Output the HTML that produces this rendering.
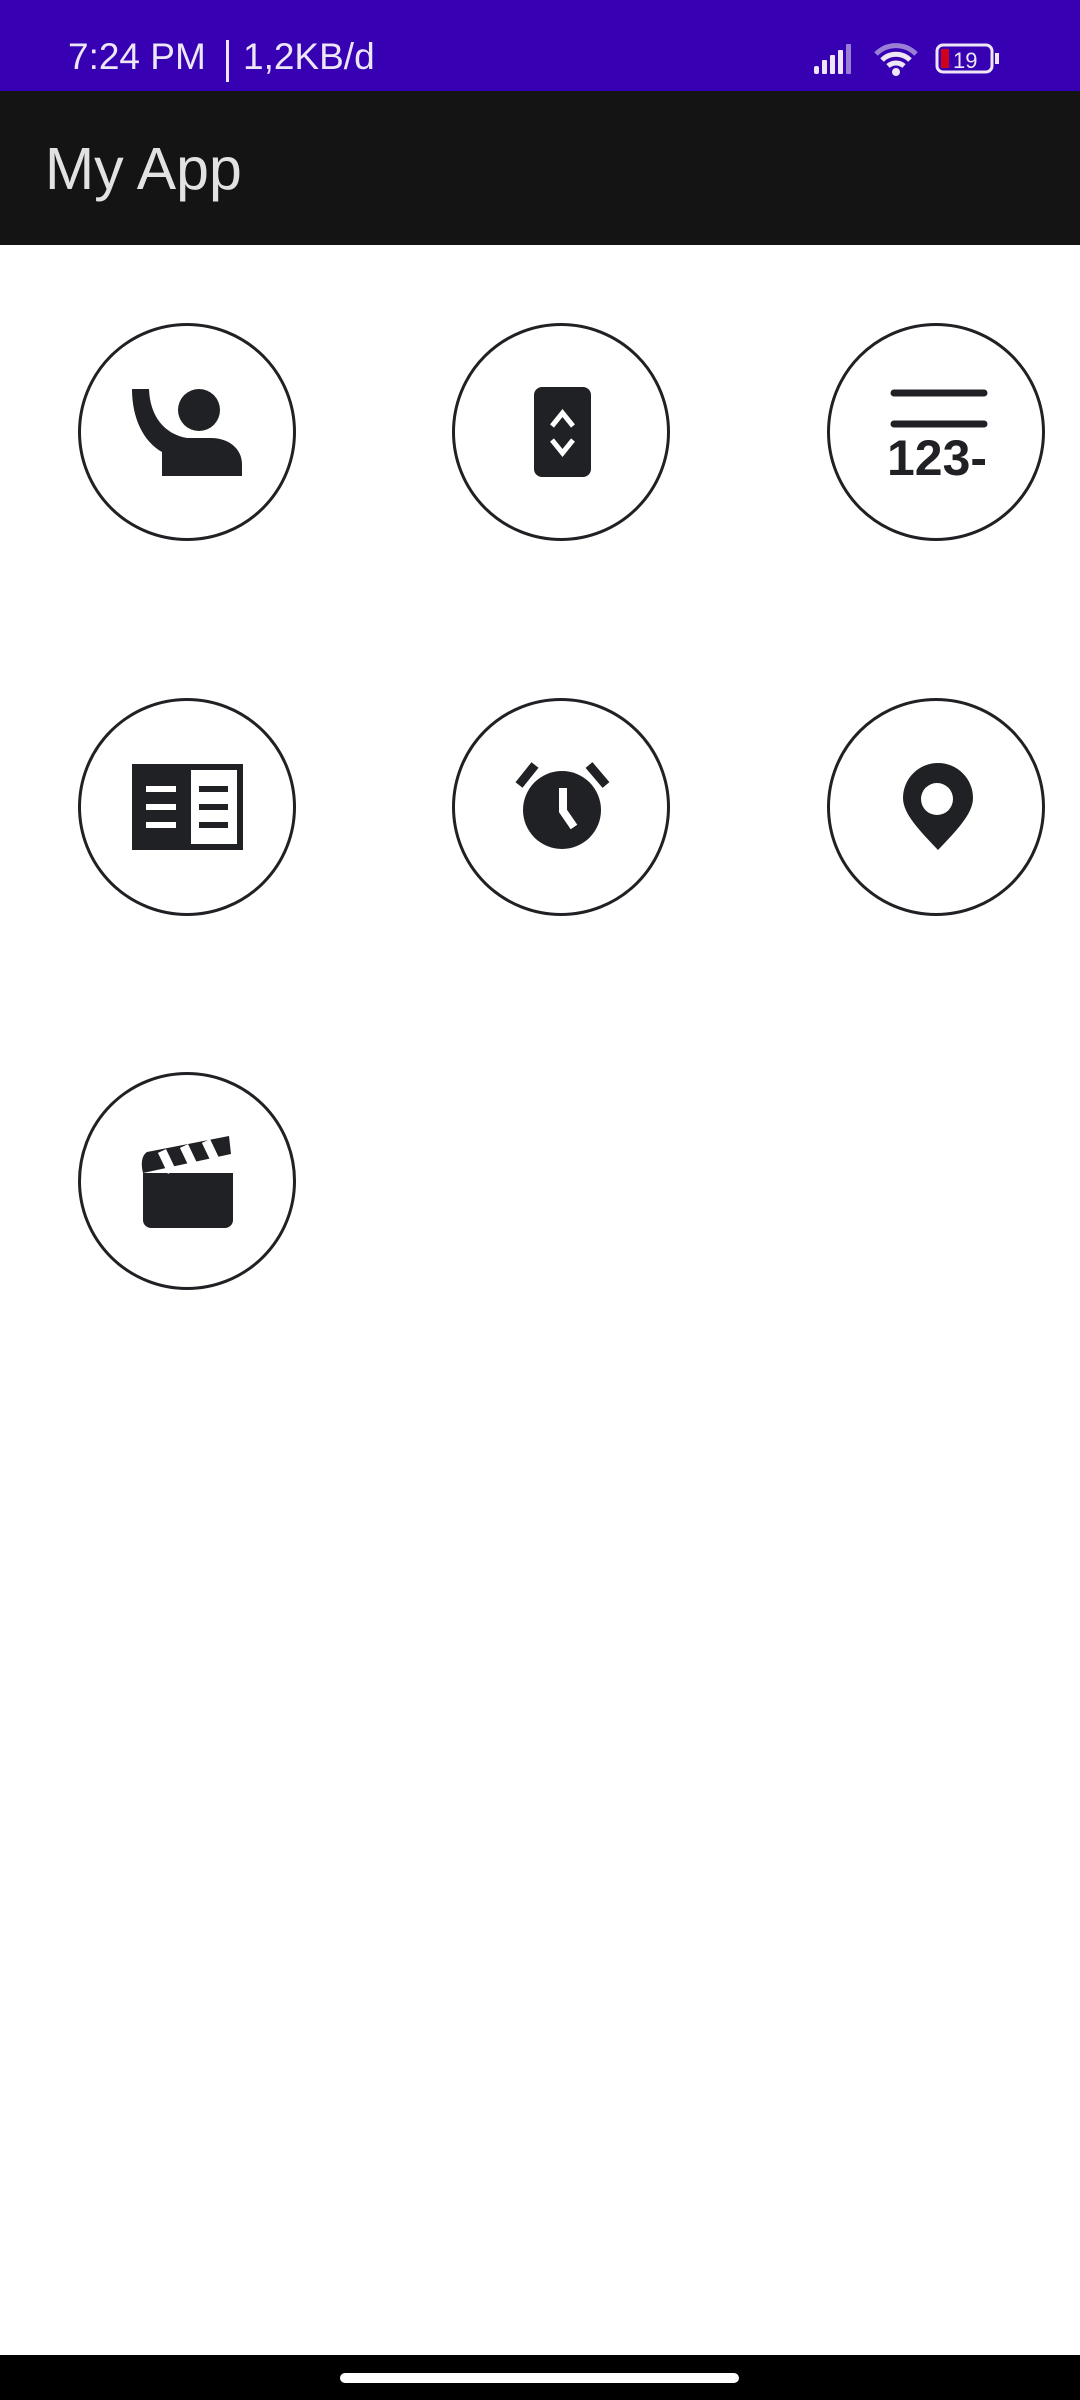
<!DOCTYPE html>
<html><head><meta charset="utf-8"><style>
html,body{margin:0;padding:0;width:1080px;height:2400px;background:#fff;overflow:hidden;font-family:"Liberation Sans",sans-serif}
.sb{position:absolute;left:0;top:0;width:1080px;height:91px;background:#3700B3}
.tb{position:absolute;left:0;top:91px;width:1080px;height:154px;background:#141414}
.t{position:absolute;color:#ece6f6;font-size:37px;top:36px;white-space:nowrap}
.title{position:absolute;left:45px;top:135px;color:#e2e2e2;font-size:59px}
.c{position:absolute;width:216px;height:216px;overflow:visible}
.nav{position:absolute;left:0;top:2355px;width:1080px;height:45px;background:#000}
.pill{position:absolute;left:340px;top:2373px;width:399px;height:10px;border-radius:5px;background:#fff}
</style></head><body>
<div class="sb"></div>
<div class="t" style="left:68px">7:24 PM</div>
<div style="position:absolute;left:226px;top:40px;width:3px;height:42px;background:#ece6f6"></div>
<div class="t" style="left:243px">1,2KB/d</div>
<svg style="position:absolute;left:810px;top:40px" width="200" height="40" viewBox="0 0 200 40">
 <g fill="#ece6f6"><rect x="4" y="26" width="5" height="8" rx="2"/><rect x="12" y="20" width="5" height="14" rx="1"/><rect x="20" y="15" width="5" height="19" rx="1"/><rect x="28" y="10" width="5" height="24" rx="1"/><rect x="36" y="4" width="5" height="30" rx="1" fill="#9a7fd6"/></g>
 <path d="M66 14 A28 28 0 0 1 106 14" fill="none" stroke="#9a7fd6" stroke-width="5"/>
 <path d="M72 20 A20 20 0 0 1 100 20" fill="none" stroke="#ece6f6" stroke-width="5"/>
 <path d="M78 26 A12 12 0 0 1 94 26" fill="none" stroke="#ece6f6" stroke-width="5"/>
 <circle cx="86" cy="32" r="4" fill="#ece6f6"/>
 <rect x="127" y="5" width="55" height="27" rx="6" fill="none" stroke="#ece6f6" stroke-width="3"/>
 <rect x="131" y="9" width="8" height="19" fill="#d0021b"/>
 <rect x="185" y="13" width="4" height="11" fill="#ece6f6"/>
 <text x="143" y="28" fill="#ece6f6" font-size="22" font-family="Liberation Sans">19</text>
</svg>
<div class="tb"></div>
<div class="title">My App</div>

<svg class="c" style="left:79px;top:324px" viewBox="0 0 216 216"><circle cx="108" cy="108" r="107.5" fill="none" stroke="#202124" stroke-width="3"/>
 <g fill="#202124"><circle cx="120" cy="86" r="21"/>
 <path d="M53,65 H70 C71,92 85,110 108,114 H132 C150,114 163,125 163,140 V152 H83 V128 C65,118 53,95 53,65 Z"/></g></svg>

<svg class="c" style="left:453px;top:324px" viewBox="0 0 216 216"><circle cx="108" cy="108" r="107.5" fill="none" stroke="#202124" stroke-width="3"/>
 <rect x="81" y="63" width="57" height="90" rx="8" fill="#202124"/>
 <path d="M99 102 L109.5 89 L120 102 M99 116 L109.5 129 L120 116" fill="none" stroke="#fff" stroke-width="5"/></svg>

<svg class="c" style="left:828px;top:324px" viewBox="0 0 216 216"><circle cx="108" cy="108" r="107.5" fill="none" stroke="#202124" stroke-width="3"/>
 <path d="M66 69 H156 M66 100 H156" stroke="#202124" stroke-width="7" stroke-linecap="round"/>
 <text x="59" y="151" font-size="50" font-weight="bold" fill="#202124" font-family="Liberation Sans" textLength="100" lengthAdjust="spacingAndGlyphs">123-</text></svg>

<svg class="c" style="left:79px;top:699px" viewBox="0 0 216 216"><circle cx="108" cy="108" r="107.5" fill="none" stroke="#202124" stroke-width="3"/>
 <rect x="53" y="65" width="111" height="86" fill="#202124"/>
 <rect x="112" y="71" width="46" height="74" fill="#fff"/>
 <g fill="#fff"><rect x="67" y="87" width="30" height="6"/><rect x="67" y="105" width="30" height="6"/><rect x="67" y="123" width="30" height="6"/></g>
 <g fill="#202124"><rect x="120" y="87" width="29" height="6"/><rect x="120" y="105" width="29" height="6"/><rect x="120" y="123" width="29" height="6"/></g></svg>

<svg class="c" style="left:453px;top:699px" viewBox="0 0 216 216"><circle cx="108" cy="108" r="107.5" fill="none" stroke="#202124" stroke-width="3"/>
 <circle cx="109" cy="111" r="39" fill="#202124"/>
 <path d="M82 66 L66 86 M136 66 L153 86" stroke="#202124" stroke-width="9"/>
 <path d="M110 89 V112 L121 128" fill="none" stroke="#fff" stroke-width="8"/></svg>

<svg class="c" style="left:828px;top:699px" viewBox="0 0 216 216"><circle cx="108" cy="108" r="107.5" fill="none" stroke="#202124" stroke-width="3"/>
 <path d="M110 151 C92 132 75 115 75 99 A35 35 0 0 1 145 99 C145 115 128 132 110 151 Z" fill="#202124"/>
 <circle cx="109" cy="100" r="16" fill="#fff"/></svg>

<svg class="c" style="left:79px;top:1073px" viewBox="0 0 216 216"><circle cx="108" cy="108" r="107.5" fill="none" stroke="#202124" stroke-width="3"/>
 <path d="M64 100 H154 V147 A8 8 0 0 1 146 155 H72 A8 8 0 0 1 64 147 Z" fill="#202124"/>
 <path d="M64 100 L152 81 L150 63 L68 79 C62 83 62 92 64 100 Z" fill="#202124"/>
 <path d="M83 78 L93 99 M105 73 L115 94 M127 68 L137 89" stroke="#fff" stroke-width="9"/></svg>

<div class="nav"></div><div class="pill"></div>
</body></html>
